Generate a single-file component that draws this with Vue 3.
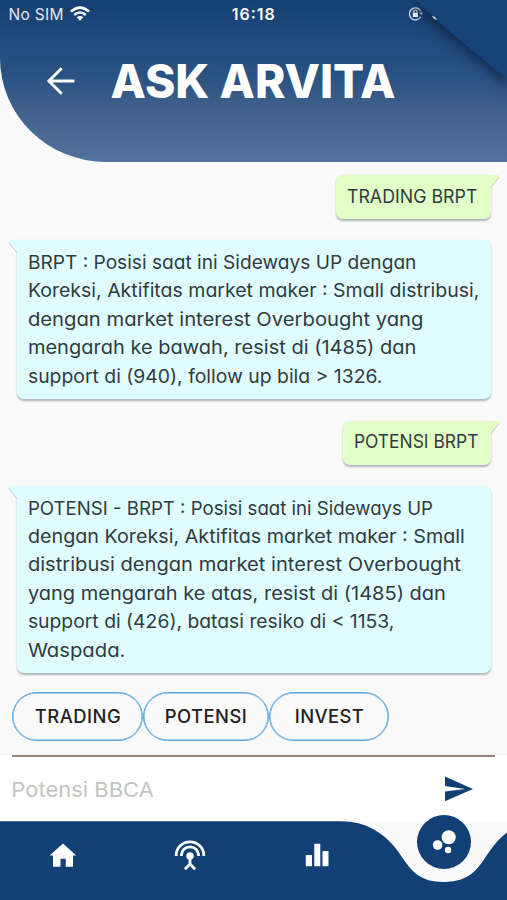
<script setup>
const messages = [
  { from: 'me', width: 130, lines: [{ text: 'TRADING BRPT', width: 130.5 }] },
  {
    from: 'bot',
    lines: [
      { text: 'BRPT : Posisi saat ini Sideways UP dengan', width: 388.5 },
      { text: 'Koreksi, Aktifitas market maker : Small distribusi,', width: 451.5 },
      { text: 'dengan market interest Overbought yang', width: 395.5 },
      { text: 'mengarah ke bawah, resist di (1485) dan', width: 388.5 },
      { text: 'support di (940), follow up bila > 1326.', width: 354.5 },
    ],
  },
  { from: 'me', width: 123, lines: [{ text: 'POTENSI BRPT', width: 124.5 }] },
  {
    from: 'bot',
    lines: [
      { text: 'POTENSI - BRPT : Posisi saat ini Sideways UP', width: 405 },
      { text: 'dengan Koreksi, Aktifitas market maker : Small', width: 437 },
      { text: 'distribusi dengan market interest Overbought', width: 433 },
      { text: 'yang mengarah ke atas, resist di (1485) dan', width: 418 },
      { text: 'support di (426), batasi resiko di < 1153,', width: 366.5 },
      { text: 'Waspada.', width: 97.5 },
    ],
  },
]
const chips = [
  { text: 'TRADING', box: 131, width: 86 },
  { text: 'POTENSI', box: 126, width: 82 },
  { text: 'INVEST', box: 120, width: 69 },
]
</script>

<template>
  <main class="screen">
    <header class="header">
      <div class="status">
        <div class="carrier">
          <svg class="carrier-text" width="56" height="20"><text x="-.5" y="15" textLength="55">No SIM</text></svg>
          <svg width="20" height="16" viewBox="0 0 20 16" fill="none" stroke="#fff" stroke-width="2.5">
            <path d="M1 5.5Q10-2.3 19 5.5M4.2 9Q10 4 15.8 9" />
            <path d="M10 14.8 6.7 11.3Q10 8.8 13.3 11.3Z" fill="#fff" stroke="none" />
          </svg>
        </div>
        <svg class="clock" width="46" height="20"><text x="-.2" y="15" textLength="43">16:18</text></svg>
        <div class="indicators">
          <svg width="32" height="16" viewBox="0 0 32 16" fill="none" stroke="#d5dfea" stroke-width="1.3">
            <path d="M11.7 10.7A6 6 0 1 1 11.8 5.2" />
            <path d="m10.2 6.2 3.6.2-1.5 2.8Z" fill="#d5dfea" stroke="none" />
            <rect x="3.8" y="6.8" width="5.2" height="4.2" rx=".5" fill="#fff" stroke="none" />
            <path d="M4.7 7V5.8a1.7 1.7 0 0 1 3.4 0v1" />
          </svg>
        </div>
      </div>
      <div class="heading">
        <svg class="back" width="30" height="30" viewBox="0 0 30 30" fill="none" stroke="#fff" stroke-width="2.9">
          <path d="M28.4 15H3M15.7 2.2 2.9 15l12.8 12.8" />
        </svg>
        <svg class="title" width="300" height="56"><text x="-.5" y="45" textLength="285" lengthAdjust="spacingAndGlyphs">ASK ARVITA</text></svg>
      </div>
      <svg class="fold" width="107" height="124" viewBox="0 0 107 124">
        <path class="fold-shadow" d="M14 0Q31 16 49 31L110 82V0Z" />
        <path d="M11-4Q31 15 49 31L110 82V-4Z" fill="#164377" />
        <path d="m32 16 1.5 2.2q1.6 1.4 4 1.2l-3.2-2.8Z" fill="#c3d0de" />
      </svg>
    </header>

    <section class="chat">
      <article v-for="(m, i) in messages" :key="i" :class="['bubble', m.from]">
        <svg v-if="m.from === 'bot'" class="tail" width="10" height="17" viewBox="0 0 10 17">
          <path d="M10 0H2Q0 .2 1.4 2L10 13Z" fill="#e0feff" />
          <path d="M.8 2.4 9 12.5" fill="none" stroke="#bccccf" />
        </svg>
        <svg v-else class="tail" width="10" height="17" viewBox="0 0 10 17">
          <path d="M0 0H8Q10 .2 8.6 2L0 13Z" fill="#e1ffc7" />
          <path d="M9 2.4 .9 12.5" fill="none" stroke="#bdcdb4" />
        </svg>
        <svg v-for="line in m.lines" :key="line.text" class="line" :width="m.width || 455" height="28.4">
          <text x="-1.1" y="20.3" :textLength="line.width" lengthAdjust="spacingAndGlyphs">{{ line.text }}</text>
        </svg>
      </article>
    </section>

    <div class="chips">
      <button v-for="c in chips" :key="c.text" class="chip" :style="{ width: c.box + 'px' }">
        <svg :width="c.width" height="24"><text x="-.2" y="18.3" :textLength="c.width">{{ c.text }}</text></svg>
      </button>
    </div>

    <div class="composer">
      <div class="composer-row">
        <svg class="placeholder" width="146" height="30"><text x="-.7" y="22.5" textLength="142.5" lengthAdjust="spacingAndGlyphs">Potensi BBCA</text></svg>
        <svg class="send" width="28" height="26" viewBox="0 0 28 26" fill="#123f74">
          <path d="M0 .5 28 13 0 25.2V15.6L20 13 0 10Z" />
        </svg>
      </div>
    </div>

    <nav class="nav">
      <svg class="nav-shape" width="507" height="79" viewBox="0 0 507 79">
        <path d="M0 .3H341C366 .3 384 12 397 29C409 45 415 61 443.7 61C471 61 479 46 489 31Q498 18 507 11.5V79H0Z" fill="#123f74" />
      </svg>
      <div class="tabs">
        <svg width="28" height="25" viewBox="0 0 28 25" fill="#fff"><path d="M14 .4 27.3 12.6H24v11.2h-7.3v-8h-5.2v8H4V12.6H.6Z" /></svg>
        <svg width="32" height="31" viewBox="0 0 32 31" fill="none" stroke="#fff" stroke-width="2.8">
          <path d="M2.2 16V15a13.8 13.2 0 0 1 27.6 0v1M7.4 16V15a8.6 8.2 0 0 1 17.2 0v1" />
          <circle cx="16" cy="16" r="3.7" fill="#fff" stroke="none" />
          <path d="M16 17v7.2M10.9 29.2 16 24l5.1 5.2" />
        </svg>
        <svg width="24" height="24" viewBox="0 0 24 24" fill="#fff"><path d="M.8 11.9H7V23.2H.8zM9.3 .8h6V23.2h-6zM17.5 7.9h6V23.2h-6z" /></svg>
      </div>
      <div class="fab">
        <svg width="26" height="26" viewBox="0 0 26 26" fill="#fff"><circle cx="17.7" cy="8.2" r="7" /><circle cx="6.6" cy="16" r="4.8" /><circle cx="17.1" cy="21" r="3.2" /></svg>
      </div>
    </nav>
  </main>
</template>

<style>
body { margin: 0; background: #fafafa; }
</style>

<style scoped>
.screen { width: 507px; height: 900px; overflow: hidden; display: flex; flex-direction: column; background: #fafafa; font-family: Inter, sans-serif; }
svg { display: block; flex: none; }
.header { position: relative; height: 162px; flex: none; box-sizing: border-box; overflow: hidden; background: linear-gradient(#154074, #2a5283 48%, #42628e 70%, #52739d); border-bottom-left-radius: 106px 104px; }
.status { display: grid; grid-template-columns: 223px 178px 1fr; height: 29px; padding: 5px 0 0 9px; box-sizing: border-box; }
.carrier { display: flex; gap: 5px; }
.carrier svg:last-child { margin-top: 1px; }
.status text { fill: #fff; font-size: 15.5px; }
.carrier-text text { fill: #e2e9f0; }
.clock text { font-weight: 600; font-size: 16px; }
.indicators { padding-top: 1px; margin-left: -1px; }
.heading { display: flex; align-items: center; padding: 24px 0 0 46px; gap: 35px; }
.title text { font-size: 46px; font-weight: 800; fill: #fff; }
.fold { position: absolute; top: 0; right: 0; }
.fold-shadow { fill: #12335f; filter: drop-shadow(-2px 5px 6px rgba(8, 28, 55, .65)); }
.chat { display: flex; flex-direction: column; height: 530px; flex: none; box-sizing: border-box; padding: 13px 16px 0 17px; }
.bubble { position: relative; display: flex; flex-direction: column; flex: none; box-sizing: border-box; border-radius: 7px; box-shadow: 0 1.5px 2px rgba(60, 70, 80, .38); margin-bottom: 21.3px; }
.bubble.me { align-self: flex-end; background: #e1ffc7; border-top-right-radius: 0; height: 44.2px; padding: 7.5px 13px 0 12px; }
.bubble.bot { background: #e0feff; border-top-left-radius: 0; padding: 8.6px 0 0 11.5px; height: 158.8px; }
.bubble.bot:last-child { height: 187px; margin-bottom: 0; }
.tail { position: absolute; top: 0; }
.bot .tail { left: -9px; }
.me .tail { right: -9px; }
.line { overflow: visible; }
.line text { font-size: 18.7px; fill: #303b40; font-feature-settings: "cv11"; }
.chips { display: flex; height: 62px; flex: none; padding-left: 12px; box-sizing: border-box; }
.chip { display: flex; align-items: center; justify-content: center; height: 49px; padding: 0; box-sizing: border-box; border: 1px solid #58a5da; box-shadow: inset 0 0 0 .5px #58a5da; border-radius: 25px; background: transparent; }
.chip text { font: 500 18.4px Inter, sans-serif; fill: #222; }
.composer { height: 67px; flex: none; box-sizing: border-box; padding: 0 12px; background: #fff; border-top: 1px solid #f0f0f0; }
.composer-row { display: flex; justify-content: space-between; border-top: 2px solid #998484; padding-top: 17px; }
.placeholder text { font-size: 20.5px; fill: #c3c3c3; font-feature-settings: "cv11"; }
.send { margin: 2px 22px 0 0; }
.nav { position: relative; height: 79px; flex: none; }
.nav-shape { position: absolute; left: 0; top: 0; }
.tabs { position: relative; display: grid; grid-template-columns: repeat(3, 127px); justify-items: center; align-items: center; height: 68px; margin-left: -1px; }
.fab { position: absolute; left: 416.5px; top: -6.5px; display: flex; align-items: center; justify-content: center; width: 54.5px; height: 54.5px; border-radius: 50%; background: #123f74; }
</style>
